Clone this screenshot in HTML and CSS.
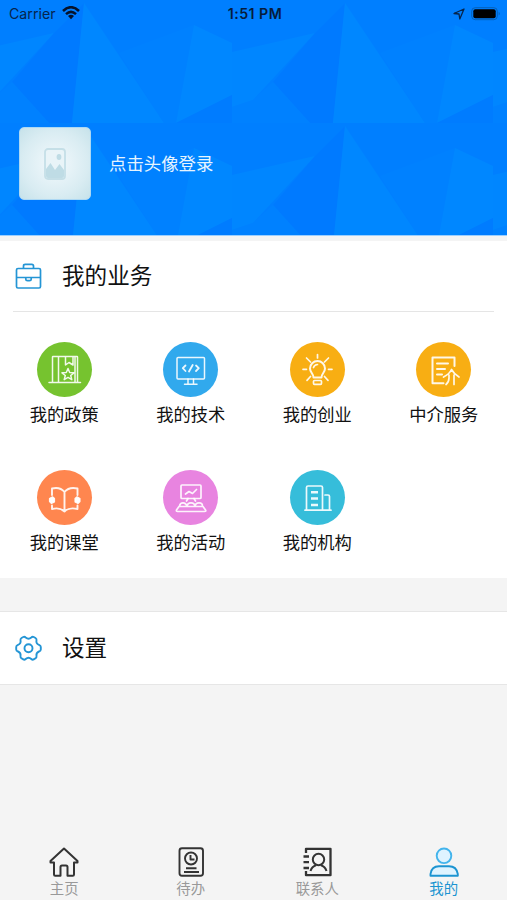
FILE: index.html
```html
<!DOCTYPE html>
<html lang="zh-CN">
<head>
<meta charset="utf-8">
<title>我的</title>
<link rel="stylesheet" href="styles.css">
</head>
<body>
<div class="app">
  <header class="hero">
    <svg class="hero-bg" width="507" height="236">
      <defs>
        <pattern id="facets" x="-29" y="0" width="261" height="123" patternUnits="userSpaceOnUse">
          <rect width="261" height="123" fill="#007fff"/>
          <path d="M0 52L83 33 21 100 0 107Z" fill="#0086ff"/>
          <path d="M83 33L113 3 101 123 78 123 41 82Z" fill="#007aff"/>
          <path d="M41 82L78 123 0 123 0 107 21 100Z" fill="#0081ff"/>
          <path d="M113 3L101 123 193 123Z" fill="#0087ff"/>
          <path d="M148 53L223 25 205 123 193 123Z" fill="#0081ff"/>
          <path d="M223 25L261 43 261 95 205 123Z" fill="#0087ff"/>
          <path d="M205 123L261 95 261 123Z" fill="#007cff"/>
        </pattern>
      </defs>
      <rect width="507" height="236" fill="url(#facets)"/>
    </svg>
    <div class="status">
      <div class="status-left">
        <span>Carrier</span>
        <svg width="18" height="14" viewBox="0 0 18 14" fill="none" stroke="#06132b" stroke-width="2.5"><path d="M1 5Q9 -2.6 17 5M4 8.200Q9 3.600 14 8.200"/><path d="M6 10Q9 7.500 12 10L9 13.300Z" fill="#06132b" stroke="none"/></svg>
      </div>
      <strong class="clock">1:51 PM</strong>
      <div class="status-right">
        <svg width="12" height="12" viewBox="0 0 12 12" fill="none" stroke="#06254d" stroke-width="1.300" stroke-linejoin="round"><path d="M1 5.500L11 1 6.800 11 6 6Z"/></svg>
        <svg width="30" height="14" viewBox="0 0 30 14"><rect x=".7" y=".7" width="25.600" height="12" rx="3.500" fill="none" stroke="#0560b8"/><rect x="2.300" y="2.300" width="22.400" height="9" rx="2" fill="#000"/><path d="M27.700 4.800Q30 6.700 27.700 8.600Z" fill="#0560b8"/></svg>
      </div>
    </div>
    <div class="profile">
      <div class="avatar">
        <svg width="22" height="32" viewBox="0 0 22 32"><rect x="1" y="1" width="20" height="30" rx="3" fill="#e9f4f8" stroke="#c5dfe7" stroke-width="1.800"/><path d="M2 21L6.500 15 11 22 15.500 16 20 22V28Q20 30 18 30H4Q2 30 2 28Z" fill="#bfdce5"/><ellipse cx="15" cy="9" rx="2.400" ry="3" fill="#bfdce5"/></svg>
      </div>
      <span class="login">点击头像登录</span>
    </div>
  </header>

  <section class="panel business">
    <div class="panel-title">
      <svg width="27" height="27" viewBox="0 0 27 27" fill="none" stroke="#2495d5" stroke-width="1.700" stroke-linejoin="round"><rect x="1.500" y="5.500" width="24" height="19.500" rx="1.500"/><path d="M8.500 5.500V3Q8.500 1.300 10.200 1.300H16.800Q18.500 1.300 18.500 3V5.500M1.500 14.500H25.500M10.800 14.500V16.200Q10.800 17.700 12.500 17.700H14.500Q16.200 17.700 16.200 16.200V14.500"/></svg>
      <h2>我的业务</h2>
    </div>
    <div class="grid">
      <a class="item"><span class="disc green"><svg viewBox="0 0 55 55" stroke-width="1.500"><path d="M12 40.500H43.500M15.500 40V15Q15.500 14.500 16 14.500H40Q40.500 14.500 40.500 15V40M21.500 14.500V40M38 14.500V40M28.500 14.500V23L32 20.500 36 23V14.500"/><path d="M31 26.500L32.700 30.500 37 30.800 33.700 33.500 34.800 37.700 31 35.400 27.200 37.700 28.300 33.500 25 30.800 29.300 30.500Z"/></svg></span>我的政策</a>
      <a class="item"><span class="disc blue"><svg viewBox="0 0 55 55" stroke-width="1.500"><rect x="14" y="15.500" width="27.500" height="21.500" rx="1"/><path d="M25 37V42M30.500 37V42M21.500 42.300H34"/><path stroke-width="1.800" d="M22.500 23.500L19.800 26.200 22.500 29M29.700 23L26 29.500M33 23.500L35.800 26.200 33 29"/></svg></span>我的技术</a>
      <a class="item"><span class="disc amber"><svg viewBox="0 0 55 55" stroke-width="1.700"><path stroke-width="2" d="M23.500 35.500C23.500 31.500 20 30.500 20 26.500A7.500 7.500 0 0 1 35 26.500C35 30.500 31.500 31.500 31.500 35.500Z"/><rect x="23.500" y="38.500" width="8" height="3.800" rx="1"/><path d="M23.500 25.500Q24.500 22.700 27.500 22.500M27.500 12.500V16M16.500 16L20.500 20M38.500 16L34.500 20M13 27.300H16.500M38.500 27.300H42M17 38.300L20.500 34.500M38 38.300L34.500 34.500"/></svg></span>我的创业</a>
      <a class="item"><span class="disc amber"><svg viewBox="0 0 55 55"><path stroke-width="2" d="M38.500 24V15.500H16.500V41.300H27.500M21 21.500H32M21 27H29M21 32.500H26"/><path stroke-width="1.700" d="M27.500 35Q33.500 32 35.500 27.500Q38 32 43 35M33 33V36Q33 40 30 42.500M38 33V42.500"/></svg></span>中介服务</a>
      <a class="item"><span class="disc orange"><svg viewBox="0 0 55 55" stroke-width="1.900"><path d="M15 25V18.500Q23 16.500 27.500 22Q32 16.500 40.500 18.500V25M27.500 22V41.500M15 35.500V39Q23 37 27.500 41.500Q32 37 40.500 39V35.500"/><path stroke-width="1.200" d="M12.500 28.500L15.500 26.800 17.500 28.500V32L14.500 33.500 12.500 31.500ZM43 28.500L40 26.800 38 28.500V32L41 33.500 43 31.500Z" fill="#fff"/></svg></span>我的课堂</a>
      <a class="item"><span class="disc pink"><svg viewBox="0 0 55 55" stroke-width="1.700"><rect x="18" y="15" width="20" height="13.500" rx="1"/><path d="M22.500 24L26 21.500 29.500 23.500 33.500 19.500M25 28.500L23.500 31M31 28.500L32.500 31M16 36.500L13.500 40Q13 41.500 14.500 41.500H41.500Q43.500 41.500 42.500 40L40 36.500ZM16.500 36Q17 32.800 20 32.800T24 36Q24.500 32.800 28 32.800T32 36Q32.500 32.800 36 32.800T39.500 36"/></svg></span>我的活动</a>
      <a class="item"><span class="disc cyan"><svg viewBox="0 0 55 55" stroke-width="1.700"><path d="M15 40.200H41M16.500 40V17.500Q16.500 16 18 16H31Q32.500 16 32.500 17.500V40M35 25H38Q39.500 25 39.500 26.500V40"/><path stroke-width="2.400" stroke-linecap="butt" d="M21 22.300H28M21 28.500H28M21 35H28"/></svg></span>我的机构</a>
    </div>
  </section>

  <section class="panel settings">
    <div class="panel-title">
      <svg width="27" height="27" viewBox="0 0 27 27" fill="none" stroke="#2495d5" stroke-width="1.900" stroke-linejoin="round"><path d="M8.300 2Q9.500 1.300 10.700 2.500Q13.500 4.800 16.300 2.500Q17.500 1.300 18.700 2L20.500 3Q21.800 3.800 21.500 5.300Q20.800 8.700 24 9.800Q25.800 10.500 25.800 12V14.500Q25.800 16 24 16.500Q20.900 17.700 21.500 21Q21.800 22.600 20.500 23.300L18.700 24.400Q17.500 25.100 16.300 24Q13.500 21.500 10.700 24Q9.500 25.100 8.300 24.400L6.500 23.300Q5.200 22.600 5.500 21Q6.100 17.700 3 16.500Q1.200 16 1.200 14.500V12Q1.200 10.500 3 9.800Q6.200 8.700 5.500 5.300Q5.200 3.800 6.500 3Z"/><circle cx="13.500" cy="13.200" r="4"/></svg>
      <h2>设置</h2>
    </div>
  </section>

  <nav class="tabs">
    <a class="tab"><svg viewBox="0 0 32 32" stroke-width="2"><path d="M16 2.500L2.500 15V16.500H6V28.500Q6 29.700 7.200 29.700H12.500V21Q12.500 19.500 14 19.500H18Q19.500 19.500 19.500 21V29.700H24.800Q26 29.700 26 28.500V16.500H29.500V15Z"/></svg>主页</a>
    <a class="tab"><svg viewBox="0 0 32 32" stroke-width="1.900"><rect x="4.500" y="2.300" width="23.500" height="27.500" rx="2.500"/><circle cx="16" cy="12.500" r="6"/><path d="M15.500 9V13.500H19.500M11 22.300H21.500M9 26H24"/></svg>待办</a>
    <a class="tab"><svg viewBox="0 0 32 32" stroke-width="2.300"><path d="M5 7V2.800H29.500V29.200H5V25M2.500 10.500H8M2.500 16.200H8M2.500 22H8"/><circle cx="17.500" cy="13.500" r="5.700" stroke-width="2"/><path d="M9.500 25Q11 20.500 15 19.300M20 19.300Q24 20.500 25.500 25" stroke-width="2"/></svg>联系人</a>
    <a class="tab active"><svg viewBox="0 0 32 32" stroke-width="1.900"><circle cx="16" cy="9.800" r="7.300" fill="#def3ff" stroke="#43b4ec"/><path d="M2.500 29.700V28Q3.500 20.300 11 20.300H21Q28.500 20.300 29.800 28V29.700Z" fill="#def3ff" stroke="#1c94d1"/></svg>我的</a>
  </nav>
</div>
</body>
</html>
```
FILE: styles.css
```css
* { box-sizing: border-box; }

body {
  margin: 0;
  background: #f4f4f4;
  color: #111;
  font-family: "Liberation Sans", "Noto Sans CJK SC", sans-serif;
}

.app {
  display: flex;
  flex-direction: column;
  width: 507px;
  height: 900px;
  overflow: hidden;
}

.hero {
  position: relative;
  height: 236px;
  flex: none;
  border-bottom: 1px solid #9bcfff;
  overflow: hidden;
}

.hero-bg {
  position: absolute;
  inset: 0;
}

.status {
  position: relative;
  display: grid;
  grid-template-columns: 1fr auto 1fr;
  align-items: center;
  height: 27px;
  padding: 0 6px 0 9px;
  font-family: Inter, sans-serif;
  font-size: 14.2px;
  color: #06254d;
}

.status-left, .status-right {
  display: flex;
  align-items: center;
  gap: 6px;
}

.status-left svg { margin-top: -2px; }
.status-right { justify-content: flex-end; }

.clock {
  font-size: 14.2px;
  letter-spacing: .45px;
  font-weight: 600;
  color: #061c3d;
}

.profile {
  position: relative;
  display: flex;
  align-items: center;
  gap: 18px;
  margin: 100px 0 0 19px;
}

.avatar {
  display: flex;
  align-items: center;
  justify-content: center;
  width: 72px;
  height: 73px;
  border: 1px solid #acd8f4;
  border-radius: 5px;
  background: radial-gradient(circle, #edf6fa 15%, #d9ecf2 65%, #c6e2ea);
}

.login {
  margin-top: -2px;
  color: #e6f4ff;
  font-size: 17.4px;
}

.panel {
  flex: none;
  background: #fff;
}

.business {
  height: 337px;
  margin-top: 5px;
}

.panel-title {
  display: flex;
  align-items: center;
  gap: 20px;
  height: 70px;
  margin: 0 13px;
  padding-left: 2px;
}

.business .panel-title {
  height: 71px;
  border-bottom: 1px solid #e5e5e5;
}

h2 {
  margin: 0;
  padding-top: 2px;
  font-size: 22.6px;
  font-weight: 400;
  line-height: 30px;
}

.grid {
  display: grid;
  grid-template-columns: repeat(4, 1fr);
  grid-auto-rows: 128px;
  padding: 30px 0 0 1px;
}

.item {
  display: flex;
  flex-direction: column;
  align-items: center;
  font-size: 17.3px;
  line-height: 24px;
  gap: 6px;
}

.disc {
  width: 55px;
  height: 55px;
  border-radius: 50%;
}

.disc svg {
  display: block;
  fill: none;
  stroke: #fff;
  stroke-opacity: .9;
  stroke-linecap: round;
  stroke-linejoin: round;
}

.green { background: #76c32f; }
.blue { background: #31a9ed; }
.amber { background: #f8ae13; }
.orange { background: #ff864f; }
.pink { background: #e884e0; }
.cyan { background: #36bdda; }

.settings {
  margin-top: 33px;
  height: 74px;
  border-top: 1px solid #e6e6e6;
  border-bottom: 1px solid #e6e6e6;
}

.settings .panel-title { height: 72px; }

.tabs {
  display: grid;
  grid-template-columns: repeat(4, 1fr);
  margin-top: auto;
  height: 54px;
  padding-left: 1px;
}

.tab {
  display: flex;
  flex-direction: column;
  align-items: center;
  color: #999;
  font-size: 14.4px;
  line-height: 22px;
}

.tab svg {
  width: 32px;
  height: 32px;
  flex: none;
  fill: none;
  stroke: #333;
  stroke-linejoin: round;
}

.tab.active { color: #1c94d1; }
```
